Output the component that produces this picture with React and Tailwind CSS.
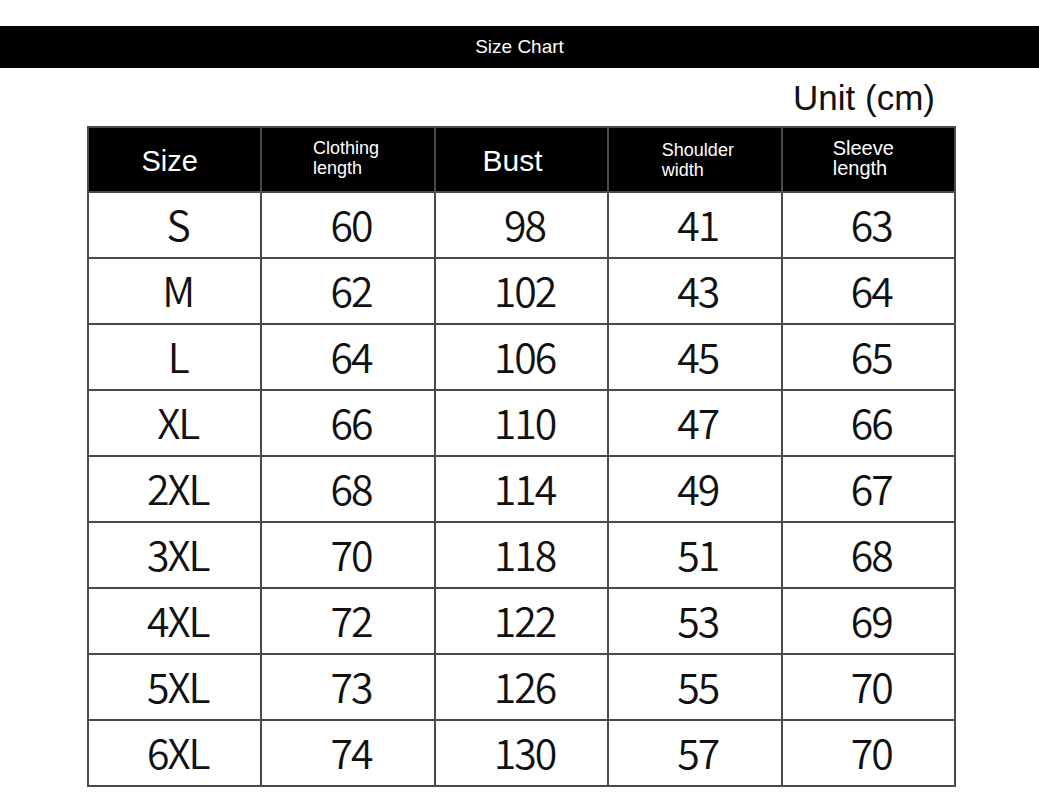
const rows = [
  ["S", "60", "98", "41", "63"],
  ["M", "62", "102", "43", "64"],
  ["L", "64", "106", "45", "65"],
  ["XL", "66", "110", "47", "66"],
  ["2XL", "68", "114", "49", "67"],
  ["3XL", "70", "118", "51", "68"],
  ["4XL", "72", "122", "53", "69"],
  ["5XL", "73", "126", "55", "70"],
  ["6XL", "74", "130", "57", "70"],
];

function TwoLine({ top, bottom, size, lead }) {
  return (
    <span className={`inline-block text-left ${lead} ${size}`}>
      {top}
      <br />
      {bottom}
    </span>
  );
}

export default function App() {
  return (
    <div className="w-[1039px] h-[800px] bg-white font-['Liberation_Sans',Arial,sans-serif]">
      <div className="h-[26px]" />
      {/* title bar */}
      <div className="h-[42px] bg-black flex items-center justify-center text-white text-[19px]">
        Size Chart
      </div>

      <div className="h-[58px] flex items-center justify-end pr-[104px]">
        <span className="text-[35px] leading-none text-[#111]">Unit (cm)</span>
      </div>

      <table className="ml-[87px] w-[869px] table-fixed border-collapse">
        <thead>
          <tr className="h-[65px] bg-black text-white">
            <th className="border-2 border-[#4a4a4a] font-normal text-[29px] pr-[10px] pt-[4px]">Size</th>
            <th className="border-2 border-[#4a4a4a] font-normal pr-[4px]">
              <TwoLine top="Clothing" bottom="length" size="text-[18px]" lead="leading-[20px]" />
            </th>
            <th className="border-2 border-[#4a4a4a] font-normal text-[30px] pr-[18px] pt-[2px]">Bust</th>
            <th className="border-2 border-[#4a4a4a] font-normal pl-[6px] pt-[4px]">
              <TwoLine top="Shoulder" bottom="width" size="text-[18px]" lead="leading-[20px]" />
            </th>
            <th className="border-2 border-[#4a4a4a] font-normal pr-[10px]">
              <TwoLine top="Sleeve" bottom="length" size="text-[20px]" lead="leading-[20px]" />
            </th>
          </tr>
        </thead>
        <tbody className="font-['Noto_Sans_CJK_SC',sans-serif] font-[350] text-[41px] text-[#111] tracking-[-2px]">
          {rows.map((r) => (
            <tr key={r[0]} className="h-[66px]">
              {r.map((v, i) => (
                <td
                  key={i}
                  className="border-2 border-[#4a4a4a] text-center leading-none pl-[6px] pb-[4px]"
                >
                  {v}
                </td>
              ))}
            </tr>
          ))}
        </tbody>
      </table>
    </div>
  );
}
